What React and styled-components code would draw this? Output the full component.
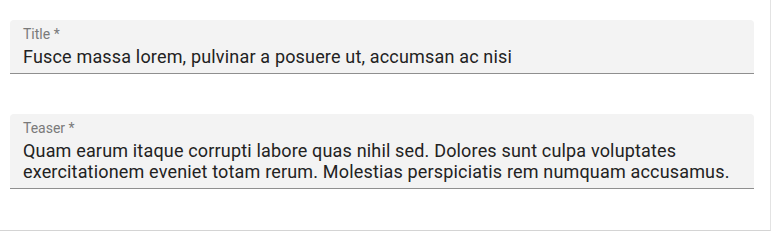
import React from 'react';
import styled, { createGlobalStyle } from 'styled-components';

const GlobalStyle = createGlobalStyle`
    html, body {
        margin: 0;
        padding: 0;
        background: #ffffff;
    }
    body {
        font-family: Roboto, "Noto Sans", "Liberation Sans", sans-serif;
    }
`

const fields = [
    {
        id: 'title',
        label: 'Title *',
        value: 'Fusce massa lorem, pulvinar a posuere ut, accumsan ac nisi',
    },
    {
        id: 'teaser',
        label: 'Teaser *',
        value: 'Quam earum itaque corrupti labore quas nihil sed. Dolores sunt culpa voluptates exercitationem eveniet totam rerum. Molestias perspiciatis rem numquam accusamus.',
    },
];

function FilledField({ label, value }) {
    return (
        <Field>
            <Label>{label}</Label>
            <Value>{value}</Value>
        </Field>
    )
}

export default function App() {
    return (
        <>
            <GlobalStyle />
            <Form>
                {fields.map(f => (
                    <FilledField key={f.id} label={f.label} value={f.value} />
                ))}
            </Form>
        </>
    )
}

const Form = styled.div`
    box-sizing: border-box;
    width: 771px;
    height: 231px;
    padding: 20px 16px 0 10px;
    display: flex;
    flex-direction: column;
    gap: 40px;
    border-right: 1px solid #e3e3e3;
    border-bottom: 1px solid #d4d4d4;
`

const Field = styled.div`
    display: flex;
    flex-direction: column;
    gap: 4px;
    padding: 6px 13px 6px;
    background: #f3f3f3;
    border-radius: 4px 4px 0 0;
    border-bottom: 1px solid #8f8f8f;
`

const Label = styled.span`
    font-size: 14px;
    line-height: 16px;
    color: #7a7a7a;
`

const Value = styled.div`
    font-size: 18px;
    line-height: 21px;
    letter-spacing: 0.17px;
    color: #222222;
`
